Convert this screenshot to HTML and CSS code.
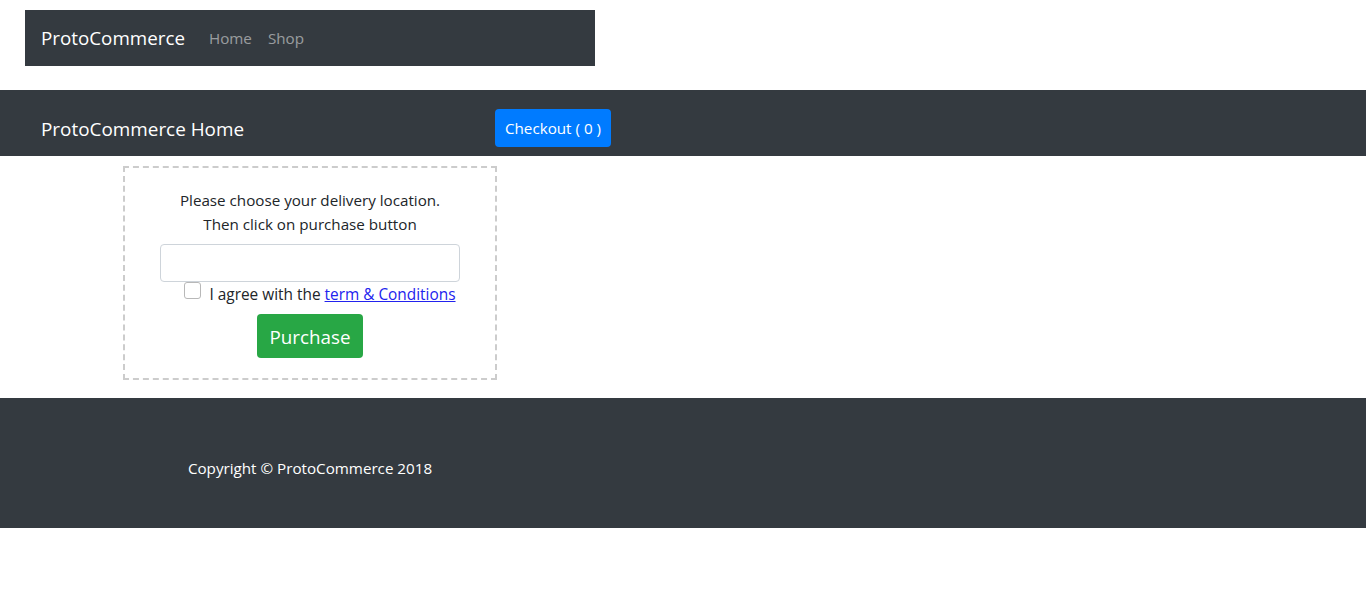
FILE: index.html
```html
<!DOCTYPE html>
<html lang="en">
<head>
<meta charset="utf-8">
<title>ProtoCommerce</title>
<link rel="stylesheet" href="styles.css">
</head>
<body>
<nav class="topnav">
  <a class="brand" href="#">ProtoCommerce</a>
  <a class="navlink" href="#">Home</a>
  <a class="navlink" href="#">Shop</a>
</nav>
<header class="hero">
  <span class="hero-title">ProtoCommerce Home</span>
  <button class="btn-checkout">Checkout ( 0 )</button>
</header>
<main class="main">
  <section class="box">
    <p class="msg">Please choose your delivery location.<br>Then click on purchase button</p>
    <input class="location" type="text">
    <div class="agree">
      <span class="checkbox"></span>
      <span class="agree-text">I agree with the <a href="#" class="terms">term &amp; Conditions</a></span>
    </div>
    <button class="btn-purchase">Purchase</button>
  </section>
</main>
<footer class="footer">
  <p class="copy">Copyright © ProtoCommerce 2018</p>
</footer>
</body>
</html>
```
FILE: styles.css
```css
* { box-sizing: border-box; }
body {
  margin: 0;
  font-family: "Open Sans", "Noto Sans", sans-serif;
  font-size: 15.2px;
  line-height: 24px;
  color: #212529;
  background: #fff;
}
.topnav {
  margin: 10px 0 0 25px;
  width: 570px;
  height: 56px;
  background: #343a40;
  display: flex;
  align-items: center;
  padding: 0 16px;
}
.brand {
  color: #fff;
  text-decoration: none;
  font-size: 18.8px;
  margin-right: 24px;
}
.navlink {
  color: rgba(255,255,255,.5);
  text-decoration: none;
  font-size: 15.2px;
  margin-right: 16px;
}
.hero {
  margin-top: 24px;
  height: 66px;
  background: #343a40;
  display: flex;
  align-items: center;
  padding: 0 0 0 41px;
}
.hero-title {
  color: #fff;
  font-size: 18.9px;
  width: 454px;
  padding-top: 12px;
}
.btn-checkout {
  align-self: flex-start;
  margin-top: 19px;
  height: 38px;
  width: 116px;
  background: #007bff;
  color: #fff;
  border: 0;
  border-radius: 4px;
  font-family: inherit;
  font-size: 15.2px;
  padding: 0;
}
.main {
  padding: 10px 0 18px 123px;
}
.box {
  width: 374px;
  height: 214px;
  border: 2px dashed #ccc;
  display: flex;
  flex-direction: column;
  align-items: center;
  padding-top: 20px;
}
.msg {
  margin: 0;
  text-align: center;
}
.location {
  margin-top: 8px;
  width: 300px;
  height: 38px;
  border: 1px solid #ced4da;
  border-radius: 4px;
}
.agree {
  display: flex;
  align-items: flex-start;
  height: 24px;
  margin-left: 20px;
}
.checkbox {
  width: 17px;
  height: 17px;
  border: 1px solid #b8b8b8;
  border-radius: 3px;
  margin-right: 8px;
}
.agree-text { font-size: 15.4px; padding-top: 1px; }
.terms { color: #2222ee; }
.btn-purchase {
  margin-top: 8px;
  width: 106px;
  height: 44px;
  background: #28a745;
  color: #fff;
  border: 0;
  border-radius: 4px;
  font-family: inherit;
  font-size: 18.8px;
  padding: 2px 0 0;
}
.footer {
  height: 130px;
  background: #343a40;
  display: flex;
  align-items: center;
}
.copy {
  margin: 0;
  width: 620px;
  text-align: center;
  color: #fff;
  padding-top: 10px;
}
```
